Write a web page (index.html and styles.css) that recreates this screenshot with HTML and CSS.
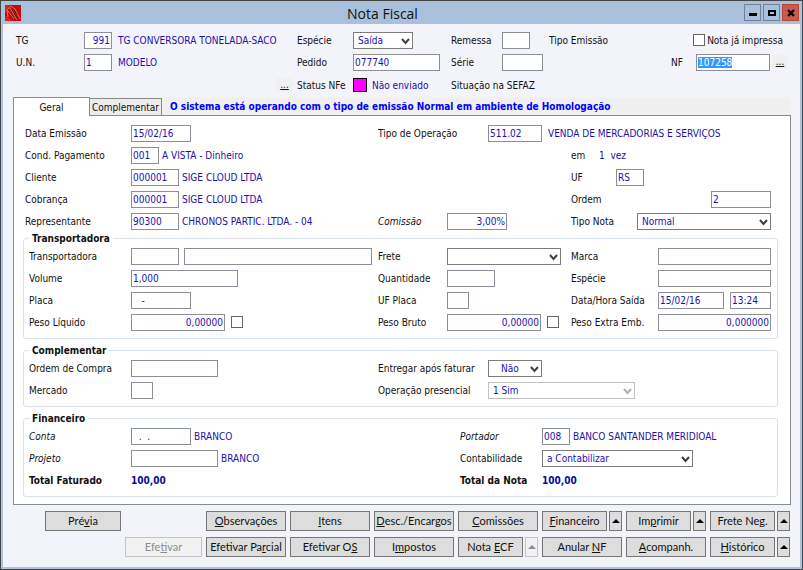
FILE: index.html
```html
<!DOCTYPE html>
<html lang="pt-BR">
<head>
    <meta charset="UTF-8">
    <meta name="viewport" content="width=device-width, initial-scale=1.0">
    <title>Nota Fiscal</title>
    <link rel="stylesheet" href="styles.css">
</head>
<body>
    <div class="window">
        <header class="title-bar">
            <svg class="app-icon" width="16" height="16" viewBox="0 0 16 16">
                <rect width="16" height="16" fill="#b80d0d"/>
                <path d="M0 9 L5 0 H0 Z" fill="#d9261c"/>
                <path d="M0 16 V10 L8 16 Z" fill="#e01b1b"/>
                <path d="M9 0 H16 V9 Z" fill="#c01010"/>
                <path d="M6 4 L13 15 M9 5 L15 13 M4 8 L10 15" stroke="#5e0404" stroke-width="1" fill="none"/>
                <path d="M2 5 L6 1 L10 4 L15 14 M5 3 L12 15 M3 6 L9 14 M2 5 L3 12" stroke="#f28a7c" stroke-width="0.8" fill="none"/>
            </svg>
            <h1 class="title">Nota Fiscal</h1>
            <div class="window-buttons">
                <button type="button" class="win-btn" aria-label="Minimizar">
                    <svg width="10" height="10" viewBox="0 0 10 10"><rect x="1" y="5" width="8" height="3"/></svg>
                </button>
                <button type="button" class="win-btn" aria-label="Maximizar">
                    <svg width="10" height="10" viewBox="0 0 10 10"><rect x="2" y="3" width="6" height="4" fill="none" stroke="#000" stroke-width="2"/></svg>
                </button>
                <button type="button" class="win-btn win-close" aria-label="Fechar">
                    <svg width="10" height="10" viewBox="0 0 10 10"><path d="M2 2 L8 8 M8 2 L2 8" stroke="#000" stroke-width="2.4"/></svg>
                </button>
            </div>
        </header>

        <form id="notaForm">
            <div class="top-grid">
                <label for="tg">TG</label>
                <div class="cell"><input id="tg" class="field w-28 right" value="991"><span class="value">TG CONVERSORA TONELADA-SACO</span></div>
                <label for="especie">Espécie</label>
                <div class="cell">
                    <span class="select w-60">
                        <select id="especie" class="field"><option>Saída</option></select>
                        <svg width="9" height="7" viewBox="0 0 9 7"><path d="M1 1 L4.5 5 L8 1"/></svg>
                    </span>
                </div>
                <label for="remessa">Remessa</label>
                <div class="cell"><input id="remessa" class="field w-28"></div>
                <span>Tipo Emissão</span>
                <div class="cell printed"><input type="checkbox" id="impressa" class="check"><label for="impressa">Nota já impressa</label></div>

                <label for="un" class="new-row">U.N.</label>
                <div class="cell"><input id="un" class="field w-28" value="1"><span class="value">MODELO</span></div>
                <label for="pedido">Pedido</label>
                <div class="cell"><input id="pedido" class="field w-87" value="077740"></div>
                <label for="serie">Série</label>
                <div class="cell"><input id="serie" class="field w-41"></div>
                <label for="nf" class="nf-label">NF</label>
                <div class="cell"><input id="nf" class="field w-74" value="107258"><button type="button" class="dots">...</button></div>

                <div class="cell more"><button type="button" class="dots">...</button></div>
                <span>Status NFe</span>
                <div class="cell"><span class="status-color"></span><span class="status">Não enviado</span></div>
                <span class="sefaz">Situação na SEFAZ</span>
            </div>

            <div class="tabs">
                <button type="button" class="tab active">Geral</button>
                <button type="button" class="tab">Complementar</button>
                <strong class="notice">O sistema está operando com o tipo de emissão Normal em ambiente de Homologação</strong>
            </div>

            <div class="panel">
                <div class="form-grid main">
                    <label for="emissao">Data Emissão</label>
                    <div class="cell"><input id="emissao" class="field w-60" value="15/02/16"></div>
                    <div class="cell rest">
                        <label for="operacao" class="label-110">Tipo de Operação</label>
                        <input id="operacao" class="field w-54" value="511.02"><span class="value">VENDA DE MERCADORIAS E SERVIÇOS</span>
                    </div>

                    <label for="cond">Cond. Pagamento</label>
                    <div class="cell"><input id="cond" class="field w-28" value="001"><span class="value near">A VISTA - Dinheiro</span></div>
                    <div class="cell last"><span class="label-28">em</span><span class="blue">1&nbsp; vez</span></div>

                    <label for="cliente">Cliente</label>
                    <div class="cell"><input id="cliente" class="field w-48" value="000001"><span class="value near">SIGE CLOUD LTDA</span></div>
                    <div class="cell last"><label for="uf" class="label-45">UF</label><input id="uf" class="field w-28" value="RS"></div>

                    <label for="cobranca">Cobrança</label>
                    <div class="cell"><input id="cobranca" class="field w-48" value="000001"><span class="value near">SIGE CLOUD LTDA</span></div>
                    <div class="cell last spread"><label for="ordem">Ordem</label><input id="ordem" class="field w-60" value="2"></div>

                    <label for="repr">Representante</label>
                    <div class="cell"><input id="repr" class="field w-48" value="90300"><span class="value near">CHRONOS PARTIC. LTDA. - 04</span></div>
                    <label for="comissao"><em>Comissão</em></label>
                    <div class="cell"><input id="comissao" class="field w-60 right" value="3,00%"></div>
                    <div class="cell last spread">
                        <label for="tipoNota">Tipo Nota</label>
                        <span class="select w-134">
                            <select id="tipoNota" class="field"><option>Normal</option></select>
                            <svg width="9" height="7" viewBox="0 0 9 7"><path d="M1 1 L4.5 5 L8 1"/></svg>
                        </span>
                    </div>
                </div>

                <fieldset>
                    <legend>Transportadora</legend>
                    <div class="form-grid">
                        <label for="transp">Transportadora</label>
                        <div class="cell carrier"><input id="transp" class="field w-48"><input class="field grow" aria-label="Nome da transportadora"></div>
                        <label for="frete">Frete</label>
                        <div class="cell">
                            <span class="select w-114">
                                <select id="frete" class="field"><option></option></select>
                                <svg width="9" height="7" viewBox="0 0 9 7"><path d="M1 1 L4.5 5 L8 1"/></svg>
                            </span>
                        </div>
                        <label for="marca">Marca</label>
                        <div class="cell"><input id="marca" class="field grow"></div>

                        <label for="volume">Volume</label>
                        <div class="cell"><input id="volume" class="field w-107" value="1,000"></div>
                        <label for="quantidade">Quantidade</label>
                        <div class="cell"><input id="quantidade" class="field w-48"></div>
                        <label for="especieVol">Espécie</label>
                        <div class="cell"><input id="especieVol" class="field grow"></div>

                        <label for="placa">Placa</label>
                        <div class="cell"><input id="placa" class="field w-60" value="   -"></div>
                        <label for="ufPlaca">UF Placa</label>
                        <div class="cell"><input id="ufPlaca" class="field w-22"></div>
                        <label for="saida">Data/Hora Saída</label>
                        <div class="cell spread"><input id="saida" class="field w-66" value="15/02/16"><input class="field w-41" value="13:24" aria-label="Hora Saída"></div>

                        <label for="liquido">Peso Líquido</label>
                        <div class="cell weight"><input id="liquido" class="field w-94 right" value="0,00000"><input type="checkbox" class="check" aria-label="Peso Líquido manual"></div>
                        <label for="bruto">Peso Bruto</label>
                        <div class="cell weight"><input id="bruto" class="field w-94 right" value="0,00000"><input type="checkbox" class="check" aria-label="Peso Bruto manual"></div>
                        <label for="extra">Peso Extra Emb.</label>
                        <div class="cell"><input id="extra" class="field grow right" value="0,000000"></div>
                    </div>
                </fieldset>

                <fieldset>
                    <legend>Complementar</legend>
                    <div class="form-grid">
                        <label for="compra">Ordem de Compra</label>
                        <div class="cell"><input id="compra" class="field w-87"></div>
                        <div class="cell rest">
                            <label for="entregar" class="label-110">Entregar após faturar</label>
                            <span class="select indent w-54">
                                <select id="entregar" class="field"><option>Não</option></select>
                                <svg width="9" height="7" viewBox="0 0 9 7"><path d="M1 1 L4.5 5 L8 1"/></svg>
                            </span>
                        </div>

                        <label for="mercado">Mercado</label>
                        <div class="cell"><input id="mercado" class="field w-22"></div>
                        <div class="cell rest">
                            <label for="presencial" class="label-110">Operação presencial</label>
                            <span class="select w-147 off">
                                <select id="presencial" class="field" disabled><option>1 Sim</option></select>
                                <svg width="9" height="7" viewBox="0 0 9 7"><path d="M1 1 L4.5 5 L8 1"/></svg>
                            </span>
                        </div>
                    </div>
                </fieldset>

                <fieldset>
                    <legend>Financeiro</legend>
                    <div class="finance-grid">
                        <label for="conta"><em>Conta</em></label>
                        <div class="cell"><input id="conta" class="field w-60" value="  .  ."><span class="value near">BRANCO</span></div>
                        <label for="portador"><em>Portador</em></label>
                        <div class="cell"><input id="portador" class="field w-28" value="008"><span class="value near">BANCO SANTANDER MERIDIOAL</span></div>

                        <label for="projeto"><em>Projeto</em></label>
                        <div class="cell"><input id="projeto" class="field w-87"><span class="value near">BRANCO</span></div>
                        <label for="contab">Contabilidade</label>
                        <div class="cell">
                            <span class="select w-151">
                                <select id="contab" class="field"><option>a Contabilizar</option></select>
                                <svg width="9" height="7" viewBox="0 0 9 7"><path d="M1 1 L4.5 5 L8 1"/></svg>
                            </span>
                        </div>

                        <strong>Total Faturado</strong>
                        <strong class="total">100,00</strong>
                        <strong>Total da Nota</strong>
                        <strong class="total">100,00</strong>
                    </div>
                </fieldset>
            </div>

            <div class="actions">
                <button type="button" class="btn">Pré<u>v</u>ia</button>
                <button type="button" class="btn col-3"><u>O</u>bservações</button>
                <button type="button" class="btn"><u>I</u>tens</button>
                <button type="button" class="btn"><u>D</u>esc./Encargos</button>
                <button type="button" class="btn"><u>C</u>omissões</button>
                <div class="split">
                    <button type="button" class="btn"><u>F</u>inanceiro</button>
                    <button type="button" class="btn arrow" aria-label="Mais opções"><svg width="8" height="4" viewBox="0 0 8 4"><path d="M0 4 L4 0 L8 4 Z"/></svg></button>
                </div>
                <div class="split">
                    <button type="button" class="btn">Im<u>p</u>rimir</button>
                    <button type="button" class="btn arrow" aria-label="Mais opções"><svg width="8" height="4" viewBox="0 0 8 4"><path d="M0 4 L4 0 L8 4 Z"/></svg></button>
                </div>
                <div class="split">
                    <button type="button" class="btn">Frete Ne<u>g</u>.</button>
                    <button type="button" class="btn arrow" aria-label="Mais opções"><svg width="8" height="4" viewBox="0 0 8 4"><path d="M0 4 L4 0 L8 4 Z"/></svg></button>
                </div>

                <button type="button" class="btn col-2" disabled>Efe<u>t</u>ivar</button>
                <button type="button" class="btn">Efetivar Pa<u>r</u>cial</button>
                <button type="button" class="btn">Efetivar O<u>S</u></button>
                <button type="button" class="btn">I<u>m</u>postos</button>
                <div class="split">
                    <button type="button" class="btn">Nota <u>E</u>CF</button>
                    <button type="button" class="btn arrow" aria-label="Mais opções" disabled><svg width="8" height="4" viewBox="0 0 8 4"><path d="M0 4 L4 0 L8 4 Z"/></svg></button>
                </div>
                <button type="button" class="btn">Anular <u>N</u>F</button>
                <button type="button" class="btn"><u>A</u>companh.</button>
                <div class="split">
                    <button type="button" class="btn"><u>H</u>istórico</button>
                    <button type="button" class="btn arrow" aria-label="Mais opções"><svg width="8" height="4" viewBox="0 0 8 4"><path d="M0 4 L4 0 L8 4 Z"/></svg></button>
                </div>
            </div>
        </form>
    </div>

    <script>
        const nf = document.getElementById('nf');
        nf.focus();
        nf.select();
    </script>
</body>
</html>
```

FILE: styles.css
```css
* {
    margin: 0;
    padding: 0;
    box-sizing: border-box;
}

body {
    min-height: 100vh;
    display: flex;
    background: #f3f3fa;
    color: #111111;
    font-family: 'DejaVu Sans Condensed', Tahoma, 'DejaVu Sans', sans-serif;
    font-size: 10px;
    line-height: 13px;
    border: 1px solid #454545;
}

input,
select,
button {
    font: inherit;
    color: inherit;
}

.window {
    flex: 1;
    border: 2px solid #a9c4e2;
    border-top: none;
}

/* title bar */
.title-bar {
    height: 23px;
    display: flex;
    align-items: center;
    background: #a8c0dc;
    padding: 0 1px 0 2px;
}

.title {
    flex: 1;
    text-align: center;
    font-family: 'Open Sans', 'Segoe UI', sans-serif;
    font-size: 14px;
    font-weight: normal;
    padding-top: 2px;
}

.window-buttons {
    display: flex;
    gap: 2px;
}

.win-btn {
    width: 17px;
    height: 17px;
    display: flex;
    align-items: center;
    justify-content: center;
    background: #a8c0dc;
    border: 1px solid #6f8297;
}

.win-close {
    background: #cf5a48;
    border-color: #b04a3c;
}

/* rows above the tabs */
.top-grid {
    display: grid;
    grid-template-columns: 68px 213px 56px 98px 51px 47px 1fr 25px 92px;
    grid-template-rows: 22px 22px 24px;
    align-items: center;
    padding: 5px 12px 0 13px;
}

.cell {
    display: flex;
    align-items: center;
    white-space: nowrap;
}

.printed {
    grid-column: span 2;
    justify-content: flex-end;
    gap: 2px;
    padding-right: 5px;
}

.new-row {
    grid-column: 1;
}

.nf-label {
    grid-column: 8;
}

.more {
    grid-column: 1 / 3;
    justify-content: flex-end;
    padding-right: 4px;
}

.sefaz {
    grid-column: span 3;
}

.dots {
    width: 17px;
    height: 14px;
    margin-left: 2px;
    border: none;
    background: #f0f0f0;
    line-height: 10px;
    text-decoration: underline;
}

.status-color {
    width: 14px;
    height: 14px;
    border: 1px solid #000000;
    background: #ff00ff;
}

.status,
.value,
.blue {
    color: #1c10a8;
}

.value {
    margin-left: 6px;
}

.near {
    margin-left: 3px;
}

.status {
    margin-left: 5px;
}

/* inputs */
.field {
    height: 17px;
    padding: 0 1px;
    border: 1px solid #8c8f99;
    border-radius: 0;
    background: #ffffff;
    color: #1c10b4;
    outline: none;
}

.field::selection {
    background: #3399ff;
    color: #ffffff;
}

.right {
    text-align: right;
}

.grow {
    flex: 1;
    min-width: 0;
}

.check {
    appearance: none;
    width: 12px;
    height: 12px;
    border: 1px solid #666666;
    background: #ffffff;
}

.select {
    position: relative;
    display: inline-flex;
}

.select .field {
    appearance: none;
    width: 100%;
    padding-left: 4px;
    border-color: #7c7c7c;
}

.indent .field {
    padding-left: 12px;
}

.select svg {
    position: absolute;
    right: 3px;
    top: 6px;
    fill: none;
    stroke: #404040;
    stroke-width: 2;
    pointer-events: none;
}

.off .field {
    border-color: #bfbfbf;
    opacity: 1;
}

.off svg {
    stroke: #b0b0b0;
}

.w-22 { width: 22px; }
.w-28 { width: 28px; }
.w-41 { width: 41px; }
.w-48 { width: 48px; }
.w-54 { width: 54px; }
.w-60 { width: 60px; }
.w-66 { width: 66px; }
.w-74 { width: 74px; }
.w-87 { width: 87px; }
.w-94 { width: 94px; }
.w-107 { width: 107px; }
.w-114 { width: 114px; }
.w-134 { width: 134px; }
.w-147 { width: 147px; }
.w-151 { width: 151px; }

/* tabs */
.tabs {
    display: flex;
    align-items: flex-end;
    margin: 0 9px 0 10px;
    background: #f0f0f0;
}

.tab {
    height: 17px;
    padding: 0 2px;
    border: 1px solid #8a8a8a;
    border-bottom: none;
    border-left: none;
    background: #ececec;
}

.tab.active {
    position: relative;
    width: 77px;
    height: 19px;
    margin-bottom: -1px;
    border-left: 1px solid #8a8a8a;
    background: #ffffff;
}

.notice {
    padding-left: 8px;
    line-height: 17px;
    color: #0000ff;
    white-space: nowrap;
}

.panel {
    margin: 0 9px 0 10px;
    padding: 6px 11px 7px;
    border: 1px solid #8a8a94;
    background: #ffffff;
}

.form-grid {
    display: grid;
    grid-template-columns: 102px 1fr 69px 124px 87px 113px;
    grid-auto-rows: 22px;
    align-items: center;
}

.main {
    grid-template-columns: 106px 1fr 69px 124px 87px 113px;
    padding-right: 8px;
}

.rest {
    grid-column: 3 / -1;
}

.last {
    grid-column: 5 / -1;
}

.spread {
    justify-content: space-between;
}

.carrier {
    gap: 5px;
    padding-right: 6px;
}

.weight {
    gap: 6px;
}

.label-110 { width: 110px; }
.label-45 { width: 45px; }
.label-28 { width: 28px; }

fieldset {
    margin: 0 1px 5px -2px;
    padding: 0 6px 5px 5px;
    border: 1px solid #d9e2e9;
    border-radius: 3px;
}

fieldset:last-child {
    margin-bottom: 0;
}

legend {
    padding: 0 3px;
    font-weight: bold;
}

.finance-grid {
    display: grid;
    grid-template-columns: 102px 1fr 82px 229px;
    grid-auto-rows: 22px;
    align-items: center;
}

.total {
    color: #0a0a9c;
}

/* bottom buttons */
.actions {
    display: grid;
    grid-template-columns: 76px 77px repeat(7, minmax(0, 1fr));
    gap: 6px 4px;
    padding: 6px 10px 9px 42px;
}

.btn {
    height: 20px;
    border: 1px solid #777777;
    background: #dddddd;
    font-family: Lato, Arial, sans-serif;
    font-size: 11px;
    line-height: 14px;
    white-space: nowrap;
}

.btn:disabled {
    border-color: #c4c4c4;
    background: #f2f2f2;
    color: #8c8c8c;
}

.col-2 {
    grid-column: 2;
}

.col-3 {
    grid-column: 3;
}

.split {
    display: flex;
    gap: 2px;
}

.split .btn:first-child {
    flex: 1;
}

.split .arrow {
    width: 13px;
    display: flex;
    align-items: center;
    justify-content: center;
}

.arrow:disabled svg {
    fill: #8c8c8c;
}
```
